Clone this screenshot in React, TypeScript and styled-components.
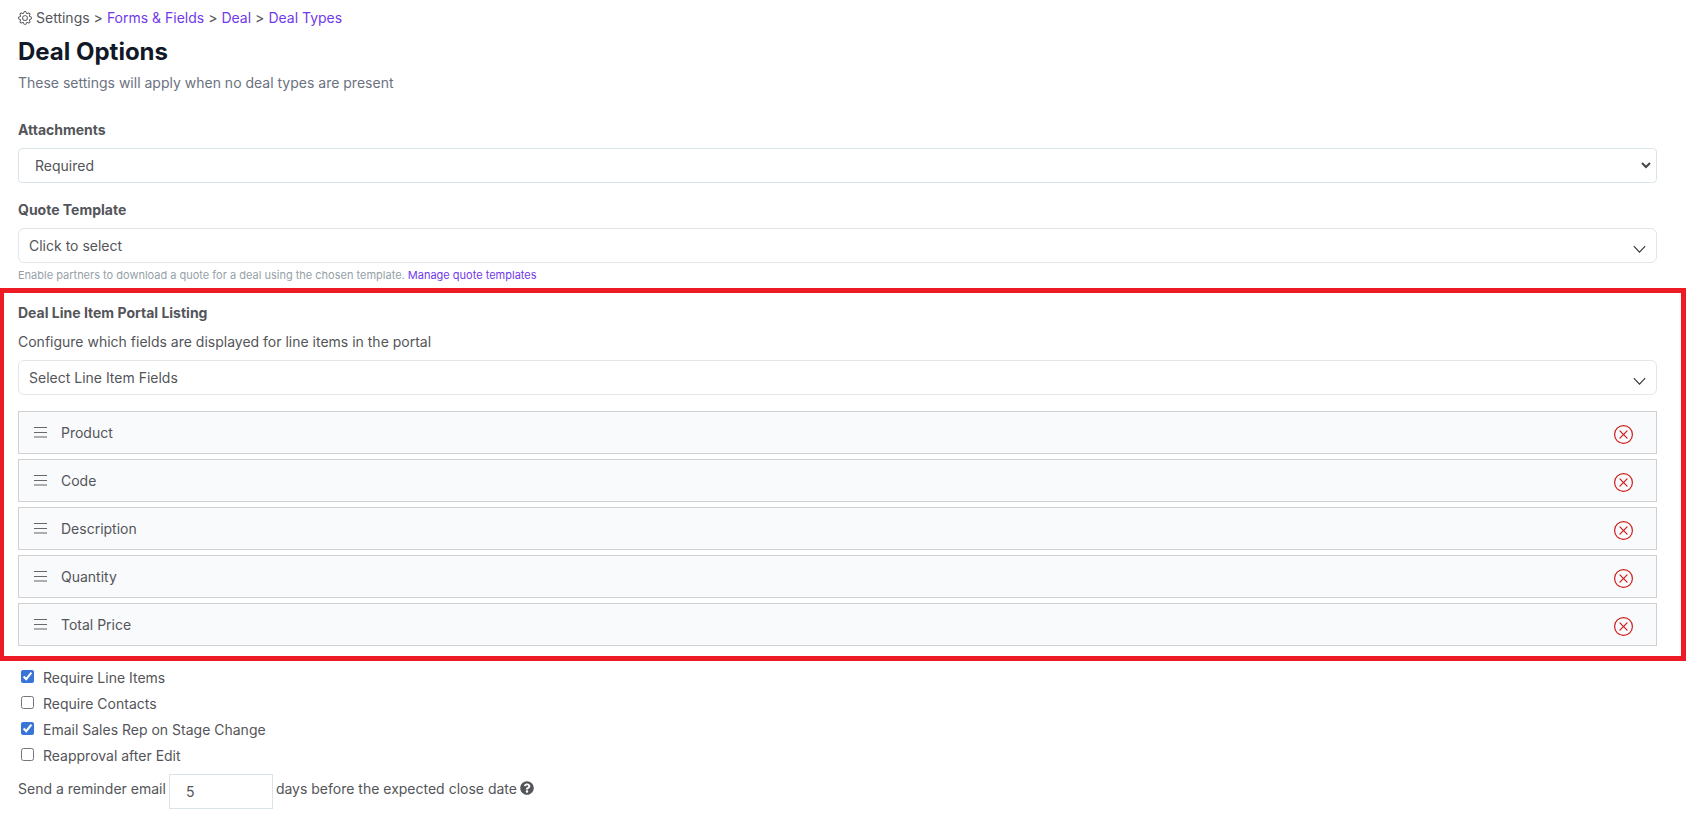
import React, { useState } from "react";
import styled, { createGlobalStyle } from "styled-components";
import { BsGear, BsXCircle } from "react-icons/bs";
import { FaQuestionCircle } from "react-icons/fa";

const GlobalStyle = createGlobalStyle`
  *, *::before, *::after { box-sizing: border-box; }
  body {
    margin: 0;
    background: #fff;
    color: #545559;
    font-family: Inter, "Liberation Sans", sans-serif;
    font-size: 14px;
    line-height: 20px;
  }
  button, input, select { font: inherit; color: inherit; }
`;

const Page = styled.main`
  padding: 8px 0 16px;
`;

const Section = styled.section`
  padding: 0 32px 0 18px;
`;

const Breadcrumb = styled.nav`
  display: flex;
  align-items: center;
  gap: 4px;
`;

const Link = styled.a`
  color: #7239ea;
  text-decoration: none;
`;

const Title = styled.h1`
  margin: 8px 0 5px;
  color: #111827;
  font-size: 24px;
  font-weight: 700;
  line-height: 32px;
`;

const Subtitle = styled.p`
  margin: 0 0 26px;
  color: #6b7280;
`;

const Field = styled.div`
  display: flex;
  flex-direction: column;
  margin-bottom: 16px;
`;

const Label = styled.label`
  margin-bottom: 8px;
  font-weight: 700;
  line-height: 21px;
`;

const SelectFrame = styled.div`
  display: grid;
  align-items: center;
  > * { grid-area: 1 / 1; }
  > svg { justify-self: end; pointer-events: none; }
`;

const Select = styled.select<{ $soft?: boolean }>`
  appearance: none;
  width: 100%;
  height: 35px;
  padding: 0 ${(p) => (p.$soft ? 10 : 16)}px;
  border: 1px solid ${(p) => (p.$soft ? "#e5e5e8" : "#dbe4e9")};
  border-radius: ${(p) => (p.$soft ? 6 : 4)}px;
  background: #fff;
`;

const NativeArrow = styled.svg`
  margin-right: 6px;
`;

const ThinArrow = styled.svg`
  margin: 8px 11px 0 0;
`;

const Hint = styled.p`
  margin: 4px 0 0;
  color: #95a1a8;
  font-size: 11px;
  line-height: 16px;
`;

const Highlight = styled.section`
  margin: -11px 3px 0 0;
  padding: 9px 24px 10px 14px;
  border: 5px solid #ed1c24;
  border-left-width: 4px;
`;

const Description = styled.p`
  margin: 0 0 8px;
  line-height: 21px;
`;

const List = styled.ul`
  display: flex;
  flex-direction: column;
  gap: 5px;
  margin: 0;
  padding: 0;
  list-style: none;
`;

const Item = styled.li`
  display: flex;
  align-items: center;
  height: 43px;
  padding: 0 23px 0 15px;
  border: 1px solid #d0d0d0;
  background: #f9fafc;
`;

const ItemName = styled.span`
  flex: 1;
  margin-left: 14px;
`;

const RemoveButton = styled.button`
  display: flex;
  margin-top: 4px;
  padding: 0;
  border: 0;
  background: none;
  color: #cc1b17;
  cursor: pointer;
`;

const Options = styled.div`
  display: flex;
  flex-direction: column;
  gap: 6px;
  padding: 7px 0 8px;
`;

const CheckRow = styled.label`
  display: flex;
  align-items: center;
  gap: 9px;
`;

const Checkbox = styled.input`
  width: 13px;
  height: 13px;
  margin: 0 0 3px 3px;
  accent-color: #3875d7;
`;

const Reminder = styled.div`
  display: flex;
  align-items: flex-start;
  gap: 3px;
  line-height: 30px;
  > svg { margin-top: 7px; }
`;

const DaysInput = styled.input`
  width: 104px;
  height: 35px;
  padding: 0 16px;
  border: 1px solid #dbe4e9;
`;

function Chevron() {
  return (
    <ThinArrow width="13" height="9" viewBox="0 0 13 9" fill="none" stroke="#333" strokeWidth="1.1" aria-hidden="true">
      <path d="M.8 1.2 6.500 7.200l5.700-6" />
    </ThinArrow>
  );
}

function Handle() {
  return (
    <svg width="13" height="11" viewBox="0 0 13 11" aria-hidden="true">
      <path d="M0 0h13v1H0zM0 5h13v1H0z" fill="#68696d" />
      <path d="M0 9h13v2H0z" fill="#adaeb1" />
    </svg>
  );
}

const crumbs = ["Forms & Fields", "Deal", "Deal Types"];
const lineItemFields = ["Product", "Code", "Description", "Quantity", "Total Price"];
const options = [
  { name: "Require Line Items", checked: true },
  { name: "Require Contacts", checked: false },
  { name: "Email Sales Rep on Stage Change", checked: true },
  { name: "Reapproval after Edit", checked: false },
];

export default function App() {
  const [fields, setFields] = useState(lineItemFields);

  return (
    <>
      <GlobalStyle />
      <Page>
        <Section>
          <Breadcrumb aria-label="Breadcrumb">
            <BsGear size={14} />
            <span>Settings</span>
            {crumbs.map((name) => (
              <React.Fragment key={name}>
                <span>&gt;</span>
                <Link href="#">{name}</Link>
              </React.Fragment>
            ))}
          </Breadcrumb>
          <Title>Deal Options</Title>
          <Subtitle>These settings will apply when no deal types are present</Subtitle>

          <Field>
            <Label htmlFor="attachments">Attachments</Label>
            <SelectFrame>
              <Select id="attachments">
                <option>Required</option>
              </Select>
              <NativeArrow width="10" height="7" viewBox="0 0 10 7" fill="none" stroke="#444" strokeWidth="2" aria-hidden="true">
                <path d="m1 1 4 4 4-4" />
              </NativeArrow>
            </SelectFrame>
          </Field>

          <Field>
            <Label htmlFor="quote">Quote Template</Label>
            <SelectFrame>
              <Select id="quote" $soft>
                <option>Click to select</option>
              </Select>
              <Chevron />
            </SelectFrame>
            <Hint>
              Enable partners to download a quote for a deal using the chosen template.{" "}
              <Link href="#">Manage quote templates</Link>
            </Hint>
          </Field>
        </Section>

        <Highlight>
          <Field>
            <Label htmlFor="line-items">Deal Line Item Portal Listing</Label>
            <Description>Configure which fields are displayed for line items in the portal</Description>
            <SelectFrame>
              <Select id="line-items" $soft>
                <option>Select Line Item Fields</option>
              </Select>
              <Chevron />
            </SelectFrame>
          </Field>
          <List>
            {fields.map((name) => (
              <Item key={name}>
                <Handle />
                <ItemName>{name}</ItemName>
                <RemoveButton
                  aria-label={`Remove ${name}`}
                  onClick={() => setFields(fields.filter((field) => field !== name))}
                >
                  <BsXCircle size={19} />
                </RemoveButton>
              </Item>
            ))}
          </List>
        </Highlight>

        <Section>
          <Options>
            {options.map(({ name, checked }) => (
              <CheckRow key={name}>
                <Checkbox type="checkbox" defaultChecked={checked} />
                {name}
              </CheckRow>
            ))}
          </Options>
          <Reminder>
            <label htmlFor="days">Send a reminder email</label>
            <DaysInput id="days" defaultValue="5" />
            <span>days before the expected close date</span>
            <FaQuestionCircle size={14} />
          </Reminder>
        </Section>
      </Page>
    </>
  );
}
